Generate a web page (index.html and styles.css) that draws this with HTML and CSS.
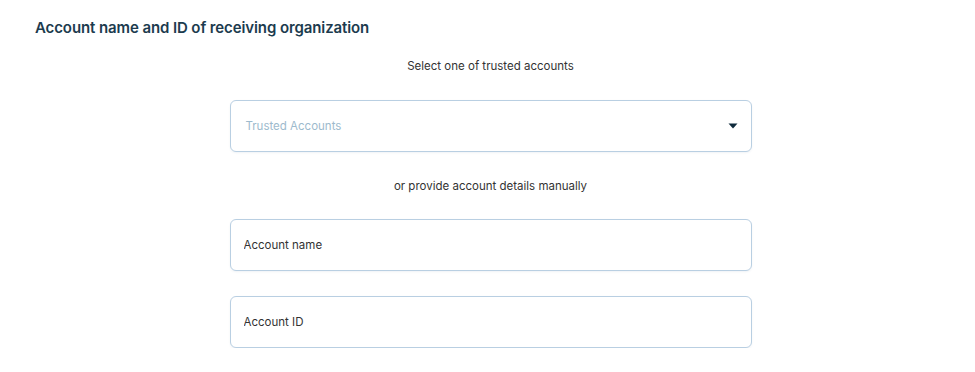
FILE: index.html
```html
<!DOCTYPE html>
<html lang="en">
<head>
<meta charset="UTF-8" />
<meta name="viewport" content="width=device-width, initial-scale=1" />
<title>Receiving organization</title>
<link rel="stylesheet" href="styles.css">
</head>
<body>

  <div class="page">
    <h2 class="section-title">Account name and ID of receiving organization</h2>

    <form class="account-form">
      <p class="caption">Select one of trusted accounts</p>

      <!-- Trusted accounts select -->
      <div class="field select-field">
        <span class="placeholder">Trusted Accounts</span>
        <svg class="arrow" width="10" height="6" viewBox="0 0 10 6">
          <path d="M0.5 0.5 H9.5 L5 5.5 Z" fill="#0f2a3c" />
        </svg>
      </div>

      <p class="caption caption-or">or provide account details manually</p>

      <div class="field">
        <input type="text" placeholder="Account name" />
      </div>
      <div class="field">
        <input type="text" placeholder="Account ID" />
      </div>
    </form>
  </div>

</body>
</html>
```

FILE: styles.css
```css
:root {
  --azul-escuro: #1c3b4e;
  --borda: #b9cfe2;
  --texto: #333;
  --placeholder: #9dbacd;
}

* {
  margin: 0;
  padding: 0;
  box-sizing: border-box;
  font-family: 'Inter', 'Roboto', sans-serif;
}

body {
  background-color: white;
  color: var(--texto);
}

.page {
  padding: 18px 29px 0 35px;
}

.section-title {
  color: var(--azul-escuro);
  font-size: 15px;
  font-weight: 600;
  line-height: 20px;
  letter-spacing: -0.1px;
}

.account-form {
  width: 522px;
  margin: 18px auto 0;
  display: flex;
  flex-direction: column;
}

.caption {
  text-align: center;
  font-size: 11.5px;
  line-height: 20px;
  color: var(--texto);
  margin-bottom: 24px;
}

.caption-or {
  margin-top: 24px;
  margin-bottom: 23px;
}

/* Campos */
.field {
  height: 52px;
  border: 1px solid var(--borda);
  border-radius: 6px;
  display: flex;
  align-items: center;
  background: white;
  box-shadow: 0 1px 2px rgba(60, 100, 140, 0.08);
}

.field + .field {
  margin-top: 25px;
}

.select-field {
  justify-content: space-between;
  padding: 0 13px 0 15px;
}

.placeholder {
  font-size: 11.5px;
  color: var(--placeholder);
}

.arrow {
  display: block;
}

.field input {
  width: 100%;
  height: 100%;
  border: none;
  outline: none;
  background: none;
  padding: 0 13px;
  font-size: 11.5px;
  color: var(--texto);
}

.field input::placeholder {
  color: var(--texto);
}
```
